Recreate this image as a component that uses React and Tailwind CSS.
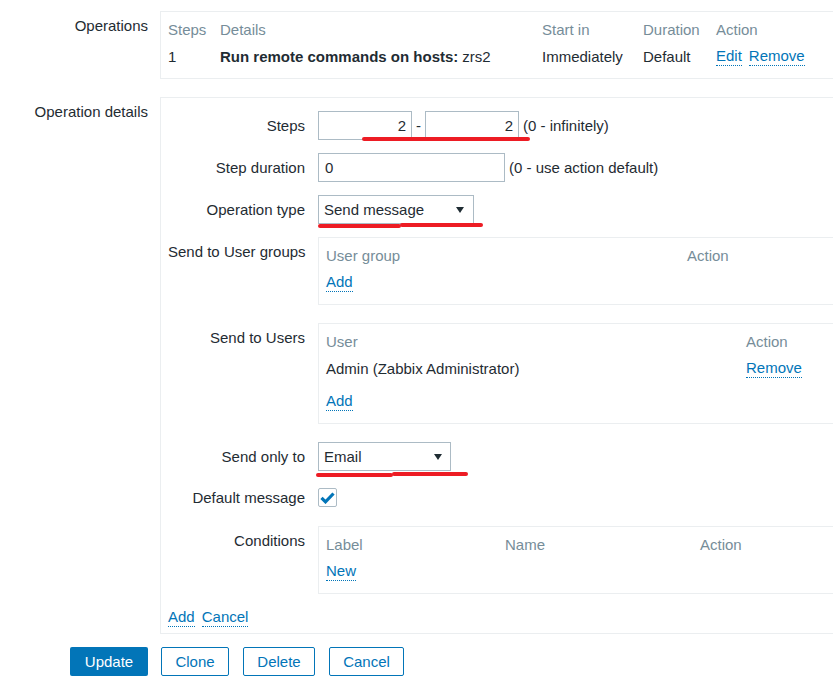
function Link({ children, className = "" }) {
  return (
    <span className={`border-b border-dotted border-[#0275b8] text-[#0275b8] ${className}`}>{children}</span>
  );
}

function Arrow() {
  return (
    <svg width="8" height="6" viewBox="0 0 8 6">
      <path d="M0 0h8L4 6z" fill="#1f2c33" />
    </svg>
  );
}

function Label({ children }) {
  return <div className="w-[137px] shrink-0 pt-[6px] text-right whitespace-nowrap">{children}</div>;
}

function Row({ label, className = "", children }) {
  return (
    <div className={`flex items-start ${className}`}>
      <Label>{label}</Label>
      <div className="ml-[13px] flex items-center">{children}</div>
    </div>
  );
}

const head = "flex h-[27px] items-center text-[#768d99]";
const cell = "flex h-[27px] items-center";

export default function App() {
  return (
    <div className="relative h-[693px] w-full overflow-hidden bg-white font-['Liberation_Sans',Arial,sans-serif] text-[15px] leading-[18px] text-[#1f2c33]">
      {/* Operations */}
      <div className="flex pt-[11px]">
        <div className="w-[148px] shrink-0 pt-[6px] text-right">Operations</div>
        <div className="ml-[12px] w-[720px] shrink-0 border border-[#ebeef0] px-[7px] pt-[4px] pb-[8px]">
          <div className="grid grid-cols-[52px_322px_101px_73px_1fr]">
            <div className={head}>Steps</div>
            <div className={head}>Details</div>
            <div className={head}>Start in</div>
            <div className={head}>Duration</div>
            <div className={head}>Action</div>
            <div className={cell}>1</div>
            <div className={cell}>
              <span className="font-bold">Run remote commands on hosts:</span>
              <span className="ml-[4px]">zrs2</span>
            </div>
            <div className={cell}>Immediately</div>
            <div className={cell}>Default</div>
            <div className={`${cell} gap-[7px]`}>
              <Link>Edit</Link>
              <Link>Remove</Link>
            </div>
          </div>
        </div>
      </div>

      {/* Operation details */}
      <div className="mt-[18px] flex">
        <div className="w-[148px] shrink-0 pt-[6px] text-right">Operation details</div>
        <div className="ml-[12px] w-[720px] shrink-0 border border-[#ebeef0] px-[7px] pt-[13px] pb-[6px]">
          <Row label="Steps">
            <div className="flex h-[29px] w-[94px] items-center justify-end border border-[#acbbc5] pr-[5px]">2</div>
            <span className="mx-[4px]">-</span>
            <div className="flex h-[29px] w-[94px] items-center justify-end border border-[#acbbc5] pr-[5px]">2</div>
            <span className="ml-[4px]">(0 - infinitely)</span>
          </Row>

          <Row label="Step duration" className="mt-[13px]">
            <div className="flex h-[29px] w-[187px] items-center border border-[#acbbc5] pl-[6px]">0</div>
            <span className="ml-[4px]">(0 - use action default)</span>
          </Row>

          <Row label="Operation type" className="mt-[13px]">
            <div className="flex h-[29px] w-[156px] items-center justify-between border border-[#acbbc5] pr-[9px] pl-[5px]">
              <span>Send message</span>
              <Arrow />
            </div>
          </Row>

          <div className="mt-[13px] flex items-start">
            <Label>Send to User groups</Label>
            <div className="ml-[13px] w-[600px] shrink-0 border border-[#ebeef0] px-[7px] pt-[4px] pb-[8px]">
              <div className="grid grid-cols-[361px_1fr]">
                <div className={head}>User group</div>
                <div className={head}>Action</div>
                <div className={cell}>
                  <Link>Add</Link>
                </div>
              </div>
            </div>
          </div>

          <div className="mt-[18px] flex items-start">
            <Label>Send to Users</Label>
            <div className="ml-[13px] w-[600px] shrink-0 border border-[#ebeef0] px-[7px] pt-[4px] pb-[8px]">
              <div className="grid grid-cols-[420px_1fr]">
                <div className={head}>User</div>
                <div className={head}>Action</div>
                <div className={cell}>Admin (Zabbix Administrator)</div>
                <div className={cell}>
                  <Link>Remove</Link>
                </div>
                <div className={`${cell} mt-[6px]`}>
                  <Link>Add</Link>
                </div>
              </div>
            </div>
          </div>

          <Row label="Send only to" className="mt-[18px]">
            <div className="flex h-[29px] w-[133px] items-center justify-between border border-[#acbbc5] pr-[8px] pl-[5px]">
              <span>Email</span>
              <Arrow />
            </div>
          </Row>

          <Row label="Default message" className="mt-[12px]">
            <div className="flex h-[29px] items-center">
              <div className="flex h-[19px] w-[19px] items-center justify-center rounded-[2px] border border-[#acbbc5]">
                <svg width="15" height="12" viewBox="0 0 15 12">
                  <path d="M1.5 5.8l4 4 8-8.3" fill="none" stroke="#0275b8" strokeWidth="3.2" />
                </svg>
              </div>
            </div>
          </Row>

          <div className="mt-[14px] flex items-start">
            <Label>Conditions</Label>
            <div className="ml-[13px] w-[600px] shrink-0 border border-[#ebeef0] px-[7px] pt-[4px] pb-[8px]">
              <div className="grid grid-cols-[179px_195px_1fr]">
                <div className={head}>Label</div>
                <div className={head}>Name</div>
                <div className={head}>Action</div>
                <div className={cell}>
                  <Link>New</Link>
                </div>
              </div>
            </div>
          </div>

          <div className="mt-[14px] flex gap-[7px]">
            <Link>Add</Link>
            <Link>Cancel</Link>
          </div>
        </div>
      </div>

      {/* Buttons */}
      <div className="mt-[13px] flex pl-[70px]">
        <button className="h-[29px] w-[78px] rounded-[2px] bg-[#0275b8] text-white">Update</button>
        <button className="ml-[13px] h-[29px] w-[68px] rounded-[2px] border border-[#0275b8] text-[#0275b8]">Clone</button>
        <button className="ml-[14px] h-[29px] w-[72px] rounded-[2px] border border-[#0275b8] text-[#0275b8]">Delete</button>
        <button className="ml-[14px] h-[29px] w-[75px] rounded-[2px] border border-[#0275b8] text-[#0275b8]">Cancel</button>
      </div>

      {/* red annotation marks */}
      <div className="absolute top-[137px] left-[362px] h-[4px] w-[168px] rounded-full bg-[#ed1c24]" />
      <div className="absolute top-[224px] left-[318px] h-[4px] w-[83px] rounded-full bg-[#ed1c24]" />
      <div className="absolute top-[223px] left-[400px] h-[4px] w-[83px] rounded-full bg-[#ed1c24]" />
      <div className="absolute top-[473px] left-[316px] h-[4px] w-[77px] rounded-full bg-[#ed1c24]" />
      <div className="absolute top-[472px] left-[392px] h-[4px] w-[76px] rounded-full bg-[#ed1c24]" />
    </div>
  );
}
